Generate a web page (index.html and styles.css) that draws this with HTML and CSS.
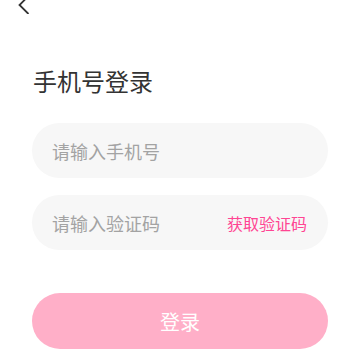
FILE: index.html
```html
<!DOCTYPE html>
<html lang="zh-CN">
<head>
    <meta charset="UTF-8">
    <meta name="viewport" content="width=device-width, initial-scale=1.0">
    <title>手机号登录</title>
    <link rel="stylesheet" href="styles.css">
</head>
<body>
    <div class="nav">
        <svg class="back" width="12" height="14" viewBox="0 0 12 14">
            <polyline points="10.5,-4 1.5,5 10.5,14" fill="none" stroke="#333" stroke-width="1.8"/>
        </svg>
    </div>

    <div class="page">
        <h1>手机号登录</h1>

        <!-- Phone input -->
        <div class="field">
            <input type="tel" placeholder="请输入手机号">
        </div>

        <!-- Code input -->
        <div class="field">
            <input type="text" placeholder="请输入验证码">
            <span class="get-code">获取验证码</span>
        </div>

        <button class="login-btn">登录</button>
    </div>
</body>
</html>
```

FILE: styles.css
```css
body {
    margin: 0;
    background: #fff;
    font-family: 'Noto Sans CJK SC', 'Noto Sans', sans-serif;
    color: #333;
}

.nav {
    height: 14px;
    padding-left: 18px;
}

.back {
    display: block;
}

.page {
    padding: 0 32px;
}

h1 {
    margin: 50px 0 25px 1px;
    font-size: 24px;
    line-height: 34px;
    font-weight: 400;
    color: #333;
}

.field {
    display: flex;
    align-items: center;
    height: 55px;
    margin-bottom: 17px;
    padding: 0 21px 0 20px;
    border-radius: 28px;
    background: #f7f7f7;
}

.field input {
    flex: 1;
    min-width: 0;
    border: none;
    outline: none;
    background: transparent;
    padding: 0;
    font-family: inherit;
    font-size: 18px;
    color: #333;
}

.field input::placeholder {
    color: #a3a3a3;
}

.get-code {
    font-size: 16px;
    color: #ff4593;
}

.login-btn {
    display: block;
    width: 100%;
    height: 56px;
    margin-top: 43px;
    border: none;
    border-radius: 28px;
    background: #ffafc8;
    color: #fff;
    font-family: inherit;
    font-size: 20px;
}
```
